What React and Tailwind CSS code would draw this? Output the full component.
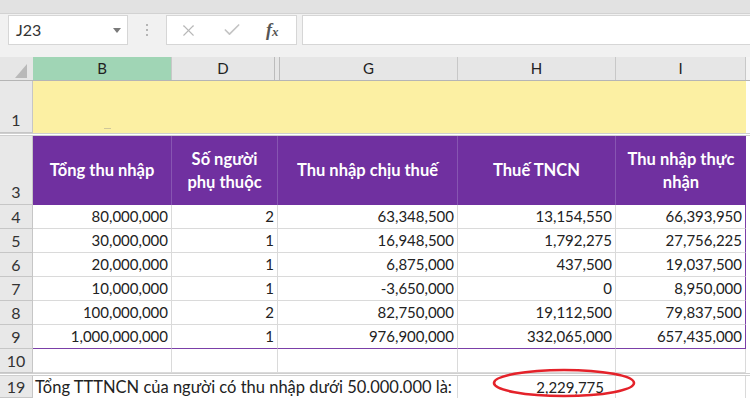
import React from "react";
import { X, Check } from "lucide-react";

const rows = [
  { n: 4, b: "80,000,000", d: "2", g: "63,348,500", h: "13,154,550", i: "66,393,950" },
  { n: 5, b: "30,000,000", d: "1", g: "16,948,500", h: "1,792,275", i: "27,756,225" },
  { n: 6, b: "20,000,000", d: "1", g: "6,875,000", h: "437,500", i: "19,037,500" },
  { n: 7, b: "10,000,000", d: "1", g: "-3,650,000", h: "0", i: "8,950,000" },
  { n: 8, b: "100,000,000", d: "2", g: "82,750,000", h: "19,112,500", i: "79,837,500" },
  { n: 9, b: "1,000,000,000", d: "1", g: "976,900,000", h: "332,065,000", i: "657,435,000" },
];

function RowHead({ n, h = "h-[24px]", end = false }) {
  return (
    <div
      className={`${h} w-[33px] shrink-0 bg-[#e8e8e8] border-r border-b border-[#c6c6c6] flex justify-center text-[16px] text-[#333] ${
        end ? "items-end" : "items-center"
      }`}
    >
      {n}
    </div>
  );
}

function Cell({ w, children, last = false, bottom = false }) {
  return (
    <div
      className={`h-[24px] ${w} shrink-0 flex items-center justify-end pr-[3px] border-b ${
        bottom ? "border-b-[#7b3fa8]" : "border-b-[#dadada]"
      } ${last ? "border-r border-r-[#7b3fa8]" : "border-r border-r-[#dadada]"}`}
    >
      {children}
    </div>
  );
}

function Sep() {
  return <div className="h-[3px] w-full bg-white border-t border-b border-[#cfcfcf]" />;
}

export default function App() {
  return (
    <div className="w-[750px] h-[398px] overflow-hidden bg-white text-[#222]" style={{ fontFamily: "Lato, 'Open Sans', sans-serif" }}>
      {/* ribbon strip */}
      <div className="h-[14px] bg-[#e2e2e2] border-b border-[#d2d2d2]" />

      {/* formula bar */}
      <div className="h-[43px] bg-[#f1f1f1] flex items-start pt-[1px]">
        <div className="ml-[8px] w-[120px] h-[30px] bg-white border border-[#d6d6d6] flex items-center pl-[7px] pr-[6px]">
          <span className="text-[16px] text-[#333]">J23</span>
          <span className="ml-auto w-0 h-0 border-l-[4px] border-r-[4px] border-t-[5px] border-l-transparent border-r-transparent border-t-[#7a7a7a]" />
        </div>
        <div className="w-[38px] h-[30px] flex flex-col items-center justify-center gap-[3px]">
          <span className="w-[2px] h-[2px] bg-[#b5b5b5]" />
          <span className="w-[2px] h-[2px] bg-[#b5b5b5]" />
          <span className="w-[2px] h-[2px] bg-[#b5b5b5]" />
        </div>
        <div className="w-[131px] h-[30px] bg-white border border-[#d6d6d6] flex items-center">
          <X size={19} strokeWidth={1.4} className="ml-[12px] text-[#b8b8b8]" />
          <Check size={20} strokeWidth={2} className="ml-[24px] text-[#c4c4c4]" />
          <span className="ml-[24px] text-[18px] italic font-bold text-[#555] leading-none" style={{ fontFamily: "'Liberation Serif', serif" }}>
            f<span className="text-[13px]">x</span>
          </span>
        </div>
        <div className="ml-[5px] flex-1 h-[30px] bg-white border-y border-l border-[#d6d6d6]" />
      </div>

      {/* column letters */}
      <div className="h-[24px] flex bg-[#e6e6e6] border-b border-[#b5b5b5] text-[15px] text-[#222]">
        <div className="w-[33px] shrink-0 relative">
          <span className="absolute right-[6px] bottom-[2px] w-0 h-0 border-b-[14px] border-l-[12px] border-l-transparent border-b-[#b9b9b9]" />
        </div>
        <div className="w-[139px] shrink-0 bg-[#a0d5b5] flex items-center justify-center border-r border-[#c8c8c8]">B</div>
        <div className="w-[103px] shrink-0 flex items-center justify-center border-r border-[#bcbcbc]">D</div>
        <div className="w-[5px] shrink-0 border-r border-[#bcbcbc]" />
        <div className="w-[178px] shrink-0 flex items-center justify-center border-r border-[#c8c8c8]">G</div>
        <div className="w-[158px] shrink-0 flex items-center justify-center border-r border-[#c8c8c8]">H</div>
        <div className="w-[130px] shrink-0 flex items-center justify-center border-r border-[#c8c8c8]">I</div>
        <div className="flex-1 bg-[#f4f4f4]" />
      </div>

      {/* row 1 */}
      <div className="flex">
        <RowHead n={1} h="h-[52px]" end />
        <div className="h-[52px] w-[713px] shrink-0 bg-[#fcf0a3] flex items-end pb-[4px]">
          <span className="ml-[71px] w-[7px] h-px bg-[#cfc79a]" />
        </div>
        <div className="flex-1" />
      </div>
      <Sep />

      {/* row 3 header */}
      <div className="flex">
        <RowHead n={3} h="h-[69px]" end />
        <div className="h-[69px] flex bg-[#7030a0] text-white font-bold text-[16.5px] leading-[23px] text-center">
          <div className="w-[139px] flex items-center justify-center border-r border-[#8755b2]">Tổng thu nhập</div>
          <div className="w-[106px] flex items-center justify-center border-r border-[#8755b2]">
            Số người
            <br />
            phụ thuộc
          </div>
          <div className="w-[180px] flex items-center justify-center border-r border-[#8755b2]">Thu nhập chịu thuế</div>
          <div className="w-[158px] flex items-center justify-center border-r border-[#8755b2]">Thuế TNCN</div>
          <div className="w-[130px] flex items-center justify-center">
            Thu nhập thực
            <br />
            nhận
          </div>
        </div>
      </div>

      {/* data rows */}
      {rows.map((r, idx) => {
        const bottom = idx === rows.length - 1;
        return (
          <div key={r.n} className="flex text-[15px] text-[#222]">
            <RowHead n={r.n} />
            <Cell w="w-[139px]" bottom={bottom}>{r.b}</Cell>
            <Cell w="w-[106px]" bottom={bottom}>{r.d}</Cell>
            <Cell w="w-[180px]" bottom={bottom}>{r.g}</Cell>
            <Cell w="w-[158px]" bottom={bottom}>{r.h}</Cell>
            <Cell w="w-[130px]" bottom={bottom} last>{r.i}</Cell>
          </div>
        );
      })}

      {/* row 10 */}
      <div className="flex">
        <RowHead n={10} />
        <Cell w="w-[139px]" />
        <Cell w="w-[106px]" />
        <Cell w="w-[180px]" />
        <Cell w="w-[158px]" />
        <div className="h-[24px] w-[130px] border-r border-b border-[#dadada]" />
      </div>
      <Sep />

      {/* row 19 */}
      <div className="flex relative text-[15px] text-[#222]">
        <RowHead n={19} h="h-[22px]" />
        <div className="h-[22px] w-[425px] shrink-0 flex items-center pl-[2px] border-r border-[#dadada] whitespace-nowrap text-[16.5px]">
          Tổng TTTNCN của người có thu nhập dưới 50.000.000 là:
        </div>
        <div className="h-[22px] w-[158px] shrink-0 flex items-center justify-end pr-[11px] border-r border-[#dadada]">2,229,775</div>
        <div className="h-[22px] w-[130px] shrink-0 border-r border-[#dadada]" />
        <svg className="absolute left-[491px] top-[-8px]" width="146" height="32" viewBox="0 0 146 32">
          <ellipse cx="73" cy="15" rx="70" ry="13" fill="none" stroke="#e4222a" strokeWidth="2.6" />
        </svg>
      </div>
    </div>
  );
}
